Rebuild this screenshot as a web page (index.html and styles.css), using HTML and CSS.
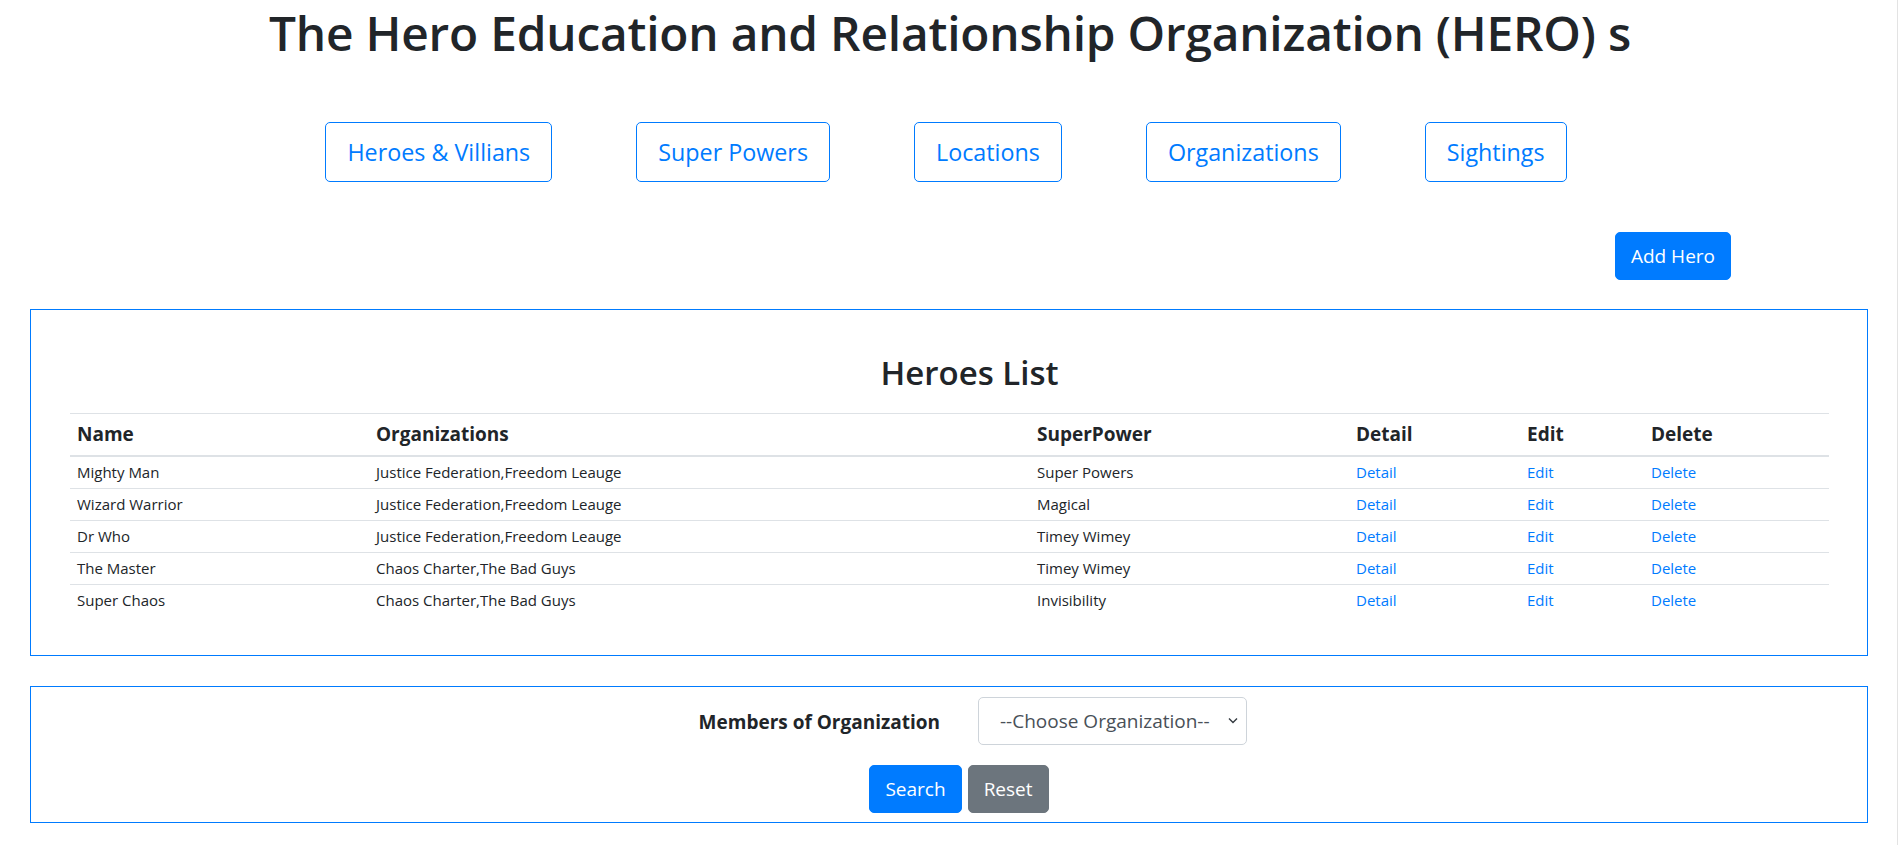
FILE: index.html
```html
<!DOCTYPE html>
<html lang="en">
<head>
<meta charset="utf-8">
<title>HERO</title>
<link rel="stylesheet" href="styles.css">
</head>
<body>
<h1 class="title">The Hero Education and Relationship Organization (HERO) s</h1>

<nav class="main-nav">
  <a class="nav-btn" href="#">Heroes &amp; Villians</a>
  <a class="nav-btn" href="#">Super Powers</a>
  <a class="nav-btn" href="#">Locations</a>
  <a class="nav-btn" href="#">Organizations</a>
  <a class="nav-btn" href="#">Sightings</a>
</nav>

<div class="actions">
  <button class="btn btn-primary">Add Hero</button>
</div>

<section class="panel list-panel">
  <h2 class="list-title">Heroes List</h2>
  <table class="heroes">
    <colgroup>
      <col class="c-name"><col class="c-org"><col class="c-power"><col class="c-detail"><col class="c-edit"><col class="c-delete">
    </colgroup>
    <thead>
      <tr><th>Name</th><th>Organizations</th><th>SuperPower</th><th>Detail</th><th>Edit</th><th>Delete</th></tr>
    </thead>
    <tbody>
      <tr><td>Mighty Man</td><td>Justice Federation,Freedom Leauge</td><td>Super Powers</td><td><a href="#">Detail</a></td><td><a href="#">Edit</a></td><td><a href="#">Delete</a></td></tr>
      <tr><td>Wizard Warrior</td><td>Justice Federation,Freedom Leauge</td><td>Magical</td><td><a href="#">Detail</a></td><td><a href="#">Edit</a></td><td><a href="#">Delete</a></td></tr>
      <tr><td>Dr Who</td><td>Justice Federation,Freedom Leauge</td><td>Timey Wimey</td><td><a href="#">Detail</a></td><td><a href="#">Edit</a></td><td><a href="#">Delete</a></td></tr>
      <tr><td>The Master</td><td>Chaos Charter,The Bad Guys</td><td>Timey Wimey</td><td><a href="#">Detail</a></td><td><a href="#">Edit</a></td><td><a href="#">Delete</a></td></tr>
      <tr><td>Super Chaos</td><td>Chaos Charter,The Bad Guys</td><td>Invisibility</td><td><a href="#">Detail</a></td><td><a href="#">Edit</a></td><td><a href="#">Delete</a></td></tr>
    </tbody>
  </table>
</section>

<section class="panel search-panel">
  <form class="search-form">
    <div class="field-row">
      <label class="field-label" for="org">Members of Organization</label>
      <div class="select-wrap">
        <select id="org" class="org-select">
          <option>--Choose Organization--</option>
        </select>
        <svg class="select-arrow" width="10" height="7" viewBox="0 0 10 7"><path d="M1 1.5l4 4 4-4" fill="none" stroke="#343a40" stroke-width="1.4"/></svg>
      </div>
    </div>
    <div class="button-row">
      <button type="button" class="btn btn-primary">Search</button>
      <button type="reset" class="btn btn-secondary">Reset</button>
    </div>
  </form>
</section>

<div class="scroll-edge"></div>
</body>
</html>
```

FILE: styles.css
```css
* { box-sizing: border-box; }

html, body {
  margin: 0;
  padding: 0;
  background: #fff;
}

body {
  font-family: "Open Sans", "Noto Sans", sans-serif;
  color: #212529;
  font-size: 16px;
  line-height: 1.5;
  padding-bottom: 21px;
}

.title {
  margin: 3px 0 0;
  text-align: center;
  font-size: 47.8px;
  line-height: 60px;
  font-weight: 600;
  letter-spacing: -0.2px;
  color: #212529;
}

.main-nav {
  display: flex;
  justify-content: center;
  gap: 84px;
  margin-top: 59px;
  padding-right: 8px;
}

.nav-btn {
  display: inline-block;
  font-size: 23.3px;
  line-height: 36px;
  padding: 11px 21px;
  border: 1px solid #007bff;
  border-radius: 5px;
  color: #007bff;
  text-decoration: none;
  background: #fff;
}

.actions {
  display: flex;
  justify-content: flex-end;
  margin-top: 50px;
  padding-right: 169px;
}

.btn {
  font-family: inherit;
  font-size: 19px;
  line-height: 30px;
  padding: 8px 15px;
  border: 1px solid transparent;
  border-radius: 5px;
  color: #fff;
  cursor: pointer;
}

.btn-primary { background: #007bff; border-color: #007bff; }
.btn-secondary { background: #6c757d; border-color: #6c757d; }

.panel {
  border: 1px solid #007bff;
  margin: 0 32px 0 30px;
}

.list-panel {
  margin-top: 29px;
  padding: 41px 38px 39px 39px;
}

.list-title {
  margin: 0 0 19px;
  padding-left: 40px;
  text-align: center;
  font-size: 33px;
  line-height: 43px;
  font-weight: 600;
  color: #212529;
}

.heroes {
  width: 100%;
  border-collapse: collapse;
  table-layout: fixed;
}

.c-name { width: 299px; }
.c-org { width: 661px; }
.c-power { width: 319px; }
.c-detail { width: 171px; }
.c-edit { width: 124px; }

.heroes th {
  text-align: left;
  font-size: 19px;
  font-weight: 700;
  line-height: 29px;
  padding: 6px 7px;
  border-top: 1px solid #dee2e6;
  border-bottom: 2px solid #dee2e6;
  white-space: nowrap;
}

.heroes td {
  font-size: 15px;
  line-height: 23px;
  padding: 4px 7px;
  border-top: 1px solid #dee2e6;
  white-space: nowrap;
}

.heroes a {
  color: #007bff;
  text-decoration: none;
}

.search-panel {
  margin-top: 30px;
  padding: 10px 0 9px 20px;
}

.search-form {
  display: flex;
  flex-direction: column;
  gap: 20px;
}

.field-row {
  display: grid;
  grid-template-columns: 1fr 1fr;
  column-gap: 38px;
  align-items: center;
}

.field-label {
  justify-self: end;
  font-size: 19px;
  font-weight: 700;
  line-height: 30px;
  padding-top: 1px;
}

.select-wrap {
  position: relative;
  width: 269px;
}

.org-select {
  appearance: none;
  -webkit-appearance: none;
  width: 269px;
  height: 48px;
  font-family: inherit;
  font-size: 19px;
  color: #495057;
  padding: 8px 34px 8px 21px;
  border: 1px solid #ced4da;
  border-radius: 5px;
  background: #fff;
}

.select-arrow {
  position: absolute;
  right: 9px;
  top: 20px;
  pointer-events: none;
}

.button-row {
  display: flex;
  justify-content: center;
  gap: 6px;
}

.scroll-edge {
  position: fixed;
  top: 0;
  bottom: 0;
  right: 2px;
  width: 1px;
  background: #e3e3e3;
}
```
